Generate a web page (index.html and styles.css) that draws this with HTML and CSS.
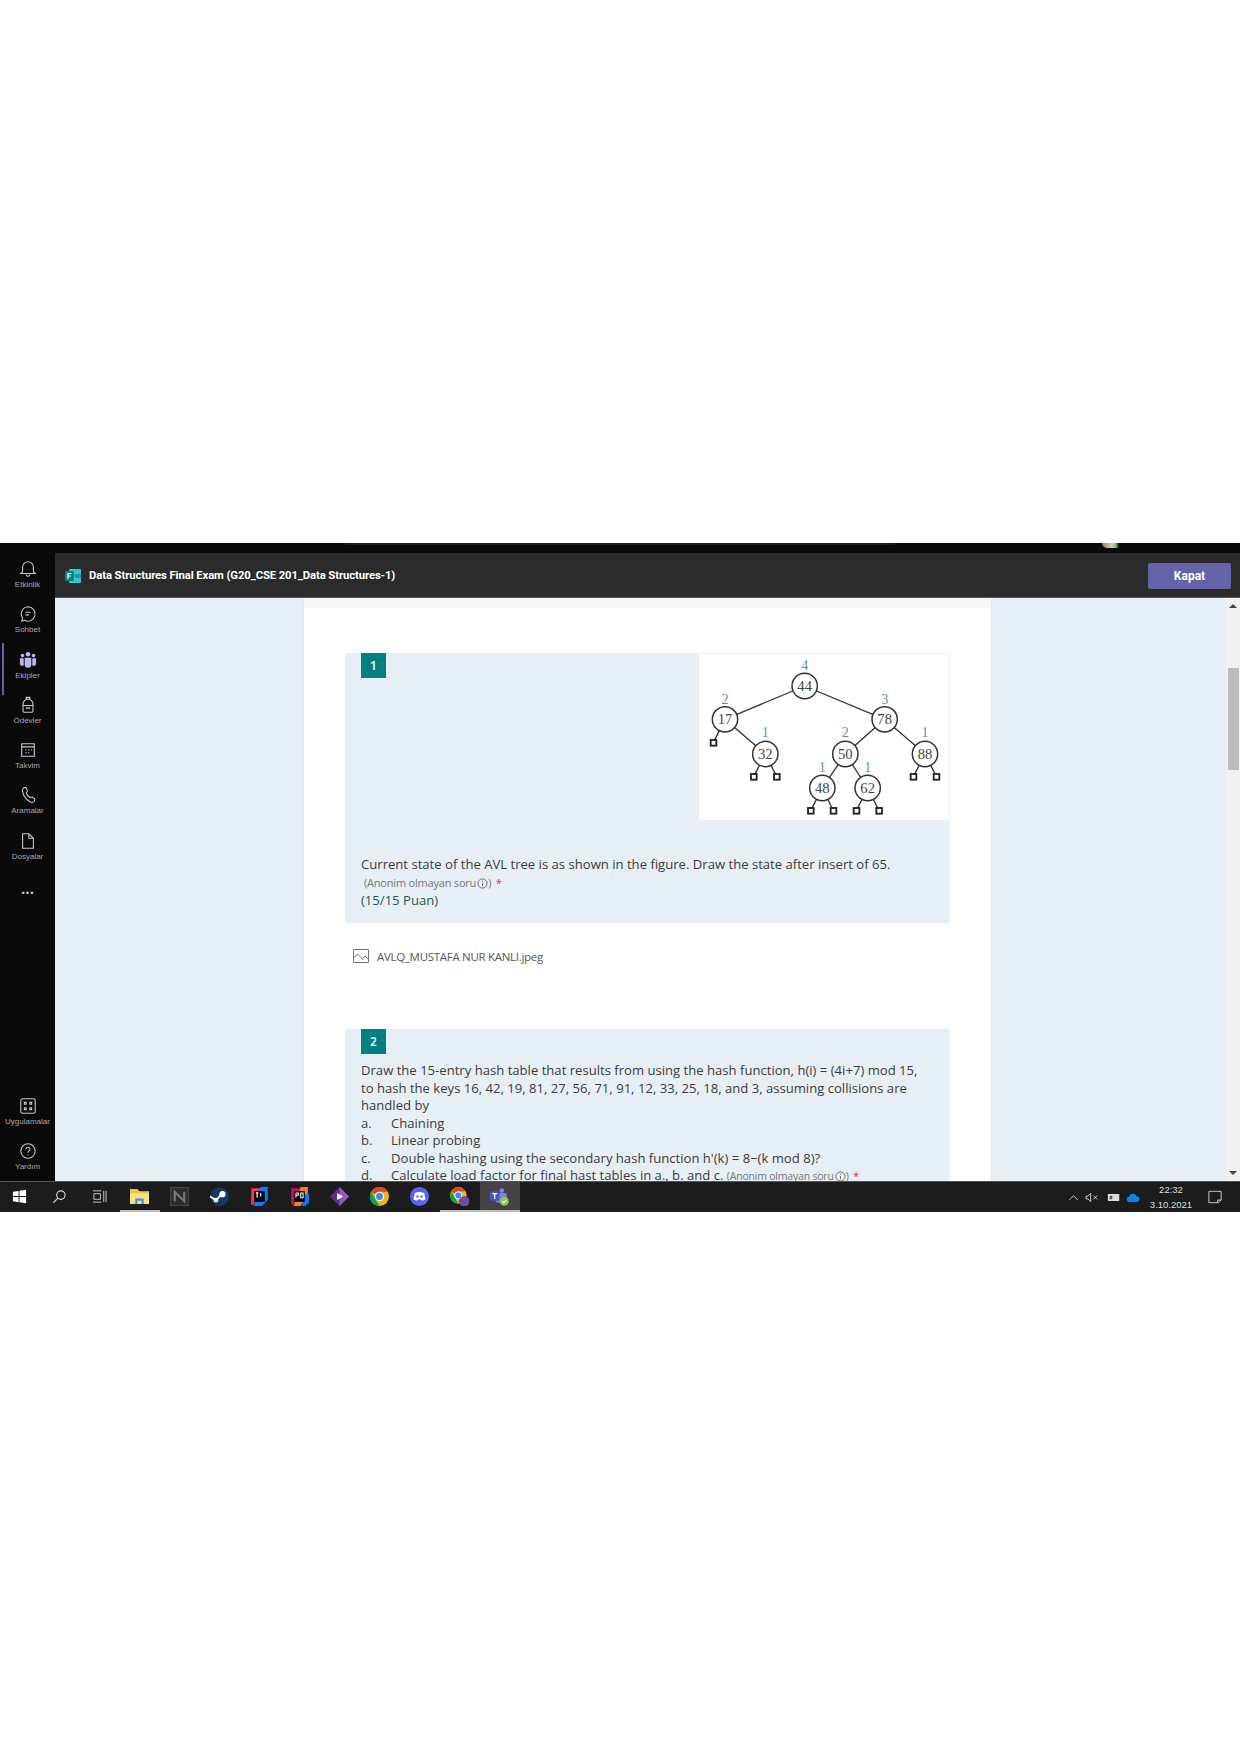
FILE: index.html

```html
<!DOCTYPE html>
<html lang="tr">
<head>
    <meta charset="UTF-8">
    <title>Data Structures Final Exam</title>
    <link rel="stylesheet" href="styles.css">
</head>
<body>
    <div class="screen">
        <div class="app">
            <div class="sidebar">
                <div class="nav-group">
                    <div class="nav-item">
                        <svg viewBox="0 0 20 20"><path d="M4 13V8a6 6 0 0 1 12 0v5l2 2H2zM8 16a2 2 0 0 0 4 0"/></svg>
                        <span>Etkinlik</span>
                    </div>
                    <div class="nav-item">
                        <svg viewBox="0 0 20 20"><path d="M10 2a8 8 0 1 1-4 15l-3 1 1-3.500A8 8 0 0 1 10 2zM7 8h6M7 11h4"/></svg>
                        <span>Sohbet</span>
                    </div>
                    <div class="nav-item active">
                        <svg viewBox="0 0 20 20"><circle cx="10" cy="3.500" r="2.500"/><circle cx="3.800" cy="5" r="2"/><circle cx="16.200" cy="5" r="2"/><path d="M6.300 7.500h7.400v7.500a3.700 3.700 0 0 1-7.400 0zM1 8h4.200v8.500H4a3 3 0 0 1-3-3zM14.800 8H19v5.500a3 3 0 0 1-3 3h-1.200z"/></svg>
                        <span>Ekipler</span>
                    </div>
                    <div class="nav-item">
                        <svg viewBox="0 0 20 20"><path d="M4.500 9a5.500 5.500 0 0 1 11 0v8a1 1 0 0 1-1 1h-9a1 1 0 0 1-1-1zM8 3.800V1.500h4v2.300M4.500 10.500h11M7.500 13.500h5"/></svg>
                        <span>Ödevler</span>
                    </div>
                    <div class="nav-item">
                        <svg viewBox="0 0 20 20"><path d="M3 3h14v14H3zM3 6.500h14M7 10h1.500M10 10h1.500M13 10h1.500M7 13h1.500M10 13h1.500"/></svg>
                        <span>Takvim</span>
                    </div>
                    <div class="nav-item">
                        <svg viewBox="0 0 20 20"><path d="M5 2l2.500-.5 2 4-1.500 2c.5 2 2.500 4.500 4.500 5.500l2-1 3 2.500-.5 2.500c-1 1.500-3 1.500-5 .5C8 15 4.500 10 4 6c-.2-1.500 0-3 1-4z"/></svg>
                        <span>Aramalar</span>
                    </div>
                    <div class="nav-item">
                        <svg viewBox="0 0 20 20"><path d="M4 2h7l5 5v11H4zM11 2v5h5"/></svg>
                        <span>Dosyalar</span>
                    </div>
                    <div class="nav-more">...</div>
                </div>
                <div class="nav-group">
                    <div class="nav-item">
                        <svg viewBox="0 0 20 20"><rect x="2" y="2" width="16" height="16" rx="2"/><path d="M6 6h2v2H6zM12 6h2v2h-2zM6 12h2v2H6zM12 12h2v2h-2z"/></svg>
                        <span>Uygulamalar</span>
                    </div>
                    <div class="nav-item">
                        <svg viewBox="0 0 20 20"><circle cx="10" cy="10" r="8"/><path d="M7.800 8a2.200 2.200 0 1 1 3.400 1.900c-.8.500-1.200 1-1.200 2M10 14v.8"/></svg>
                        <span>Yardım</span>
                    </div>
                </div>
            </div>

            <div class="main">
                <div class="top-strip">
                    <div class="top-strip-inner"></div>
                    <div class="avatar-bit"></div>
                </div>
                <div class="titlebar">
                    <svg class="forms-logo" viewBox="0 0 16 14"><rect x="4" y="0" width="12" height="14" rx="1" fill="#37c6d0"/><rect x="10" y="5" width="6" height="4" fill="#1a9ba1"/><rect x="0" y="2" width="9" height="10" rx="1" fill="#038387"/><path d="M3 10V4.500h3.500M3 7h3" stroke="#fff" stroke-width="1.200" fill="none"/></svg>
                    <div class="title">Data Structures Final Exam (G20_CSE 201_Data Structures-1)</div>
                    <button class="close-btn">Kapat</button>
                </div>
                <div class="content">
                    <div class="page">
                        <div class="card">
                            <div class="card-top"></div>
                            <div class="question first">
                                <div class="q-head">
                                    <div class="badge">1</div>
                                    <svg class="tree" viewBox="58 42 750 498">
                                        <rect x="58" y="42" width="750" height="498" fill="#fff"/>
                                        <g class="edges">
                                            <path d="M375 138L136 238M375 138L615 238M136 238L101 308M136 238L257 342M257 342L222 410M257 342L291 410M615 238L497 342M615 238L736 342M497 342L428 444M497 342L564 444M736 342L701 410M736 342L770 410M428 444L393 512M428 444L461 512M564 444L530 512M564 444L598 512"/>
                                        </g>
                                        <g class="leaves">
                                            <rect x="93" y="300" width="17" height="17"/><rect x="214" y="402" width="17" height="17"/><rect x="283" y="402" width="17" height="17"/><rect x="693" y="402" width="17" height="17"/><rect x="762" y="402" width="17" height="17"/><rect x="385" y="504" width="17" height="17"/><rect x="453" y="504" width="17" height="17"/><rect x="522" y="504" width="17" height="17"/><rect x="590" y="504" width="17" height="17"/>
                                        </g>
                                        <g class="nodes">
                                            <circle cx="375" cy="138" r="38"/><circle cx="136" cy="238" r="38"/><circle cx="615" cy="238" r="38"/><circle cx="257" cy="342" r="38"/><circle cx="497" cy="342" r="38"/><circle cx="736" cy="342" r="38"/><circle cx="428" cy="444" r="38"/><circle cx="564" cy="444" r="38"/>
                                        </g>
                                        <g class="keys">
                                            <text x="375" y="153">44</text><text x="136" y="253">17</text><text x="615" y="253">78</text><text x="257" y="357">32</text><text x="497" y="357">50</text><text x="736" y="357">88</text><text x="428" y="459">48</text><text x="564" y="459">62</text>
                                        </g>
                                        <g class="heights">
                                            <text x="375" y="90">4</text><text x="136" y="192">2</text><text x="615" y="192">3</text><text x="257" y="290">1</text><text x="497" y="292">2</text><text x="736" y="292">1</text><text x="428" y="395">1</text><text x="564" y="395">1</text>
                                        </g>
                                    </svg>
                                </div>
                                <div class="q-text q-first-text">Current state of the AVL tree is as shown in the figure. Draw the state after insert of 65.</div>
                                <div class="anon">(Anonim olmayan soru<svg class="info" viewBox="0 0 12 12"><circle cx="6" cy="6" r="5"/><path d="M6 5.500v3.500M6 3v1"/></svg>) <span class="req">*</span></div>
                                <div class="q-text score">(15/15 Puan)</div>
                            </div>

                            <div class="file-row">
                                <svg class="file-icon" viewBox="0 0 16 14"><path d="M.5.500h15v13H.500zM.500 9l4-4 6 6M10 9l2-2 3.500 3.500"/></svg>
                                <span>AVLQ_MUSTAFA NUR KANLI.jpeg</span>
                            </div>

                            <div class="question second">
                                <div class="badge">2</div>
                                <div class="q-text q-body">Draw the 15-entry hash table that results from using the hash function, h(i) = (4i+7) mod 15,<br>to hash the keys 16, 42, 19, 81, 27, 56, 71, 91, 12, 33, 25, 18, and 3, assuming collisions are<br>handled by</div>
                                <div class="q-text opt"><span>a.</span>Chaining</div>
                                <div class="q-text opt"><span>b.</span>Linear probing</div>
                                <div class="q-text opt"><span>c.</span>Double hashing using the secondary hash function h'(k) = 8−(k mod 8)?</div>
                                <div class="q-text opt"><span>d.</span>Calculate load factor for final hast tables in a., b. and c. <em class="anon-inline">(Anonim olmayan soru<svg class="info" viewBox="0 0 12 12"><circle cx="6" cy="6" r="5"/><path d="M6 5.500v3.500M6 3v1"/></svg>) <b class="req">*</b></em></div>
                            </div>
                        </div>
                    </div>
                    <div class="scrollbar">
                        <div class="arrow up"></div>
                        <div class="thumb"></div>
                        <div class="arrow down"></div>
                    </div>
                </div>
            </div>
        </div>

        <div class="taskbar">
            <div class="task small"><svg viewBox="0 0 16 16"><path fill="#fff" d="M1 3l6-1v5.500H1zM8 1.800l7-1v6.700H8zM1 8.500h6V14l-6-1zM8 8.500h7v6.700l-7-1z"/></svg></div>
            <div class="task small"><svg viewBox="0 0 16 16"><circle cx="9.500" cy="6.500" r="4.500" fill="none" stroke="#ddd" stroke-width="1.200"/><path d="M6.300 9.700L1.500 14.500" stroke="#ddd" stroke-width="1.200"/></svg></div>
            <div class="task small"><svg viewBox="0 0 16 16"><path d="M1 2h9M1 14h9M2 5h7v6H2zM12.500 2v12M15 2v12" fill="none" stroke="#ccc"/></svg></div>
            <div class="task underlined"><svg viewBox="0 0 18 16"><path fill="#f0c24a" d="M0 1h7l2 2h9v12H0z"/><path fill="#fbe08a" d="M0 5h18v10H0z"/><path fill="#3a96dd" d="M5 10h8v5h-2v-3H7v3H5z"/></svg></div>
            <div class="task"><svg viewBox="0 0 16 16"><rect x=".5" y=".5" width="15" height="15" fill="#2b2b2b" stroke="#444"/><path d="M4 12V4l8 8V4" fill="none" stroke="#777" stroke-width="1.800"/></svg></div>
            <div class="task"><svg viewBox="0 0 16 16"><circle cx="8" cy="8" r="8" fill="#14385e"/><circle cx="10.500" cy="6" r="2.600" fill="#fff"/><circle cx="5" cy="11" r="2" fill="#fff"/><path d="M0 8l5 3 5-5" stroke="#fff" stroke-width="1.600" fill="none"/></svg></div>
            <div class="task"><svg viewBox="0 0 16 16"><path fill="#fe315d" d="M1 1h8L3 15H1z"/><path fill="#087cfa" d="M9 0h6v11l-5 5H3z"/><rect x="3.500" y="3.500" width="9" height="9" fill="#000"/><path d="M5 5h2M6 5v4M9 5v3" stroke="#fff"/></svg></div>
            <div class="task"><svg viewBox="0 0 16 16"><path fill="#c90f5e" d="M1 1h8L3 15H1z"/><path fill="#f58220" d="M3 16l6-16h6v6L9 16z"/><path fill="#087cfa" d="M12 6h4v7l-3 3h-3z"/><rect x="3.500" y="3.500" width="9" height="9" fill="#000"/><path d="M5 5v4M5 5h2v2H5M9 5v4h2V5z" fill="none" stroke="#fff" stroke-width=".9"/></svg></div>
            <div class="task"><svg viewBox="0 0 16 16"><path fill="#5c2d91" d="M8 0l8 8-8 8-8-8z"/><path fill="#b180d7" d="M8 0l8 8-8 8z" opacity=".6"/><path fill="#fff" d="M6 5l5 3-5 3z"/></svg></div>
            <div class="task"><svg viewBox="0 0 16 16"><circle cx="8" cy="8" r="8" fill="#e9b61c"/><path fill="#db4437" d="M1 4a8 8 0 0 1 14 0H8a4 4 0 0 0-4 2z"/><path fill="#0f9d58" d="M1 4l4 7 3 5A8 8 0 0 1 1 4z"/><circle cx="8" cy="8" r="3.400" fill="#4285f4" stroke="#fff"/></svg></div>
            <div class="task"><svg viewBox="0 0 16 16"><circle cx="8" cy="8" r="8" fill="#5865f2"/><path fill="#fff" d="M4 5c2.500-1 5.500-1 8 0l1 5.500c-1 .6-2 1-3 1l-.6-1H6.600l-.6 1c-1 0-2-.4-3-1z"/><circle cx="6.300" cy="8" r="1" fill="#5865f2"/><circle cx="9.700" cy="8" r="1" fill="#5865f2"/></svg></div>
            <div class="task underlined"><svg viewBox="0 0 16 16"><circle cx="7" cy="7" r="7" fill="#e9b61c"/><path fill="#db4437" d="M1 3.500a7 7 0 0 1 12 0H7a3.500 3.500 0 0 0-3 2z"/><path fill="#0f9d58" d="M1 3.500L7 14A7 7 0 0 1 1 3.500z"/><circle cx="7" cy="7" r="3" fill="#4285f4" stroke="#fff" stroke-width=".8"/><circle cx="12" cy="12" r="4.500" fill="#6b4fa0"/></svg></div>
            <div class="task underlined current"><svg viewBox="0 0 16 16"><circle cx="10" cy="3" r="2" fill="#7b83eb"/><rect x="5" y="5" width="9" height="8" rx="1" fill="#7b83eb"/><rect x="0" y="3.500" width="8" height="8" rx="1" fill="#4b53bc"/><path d="M2 5.500h4M4 5.500v4.500" stroke="#fff"/><circle cx="12" cy="12" r="3.800" fill="#92c353"/><path d="M10.500 12l1.200 1.200 2-2.200" stroke="#fff" fill="none"/></svg></div>

            <div class="tray">
                <svg class="tray-caret" viewBox="0 0 12 8"><path d="M1 7l5-5 5 5"/></svg>
                <svg class="tray-sound" viewBox="0 0 16 12"><path d="M1 4.500h2L6 1.500v9l-3-3H1zM9 4l4 4M13 4l-4 4"/></svg>
                <svg class="tray-battery" viewBox="0 0 16 10"><path fill="#ddd" d="M1 1h13v8H1z"/><path fill="#555" d="M3 3h3v4H3z"/></svg>
                <svg class="tray-cloud" viewBox="0 0 16 10"><path fill="#0a84e0" d="M4 10a3 3 0 0 1-.500-6A4.500 4.500 0 0 1 12 3.500 3.300 3.300 0 0 1 13 10z"/></svg>
                <div class="clock">22:32<br>3.10.2021</div>
                <svg class="tray-note" viewBox="0 0 16 16"><path d="M1 1.500h14v10l-3 3H1zM11 14.500v-3h4"/></svg>
            </div>
        </div>
    </div>
</body>
</html>
```

FILE: styles.css

```css
body {
    margin: 0;
    min-height: 1755px;
    background: #fff;
    font-family: "Open Sans", "Liberation Sans", sans-serif;
}
.screen {
    margin-top: 543px;
    height: 669px;
    display: flex;
    flex-direction: column;
}
.app {
    display: flex;
    height: 638px;
}

/* left rail */
.sidebar {
    width: 55px;
    flex-shrink: 0;
    background: #0a0a0a;
    display: flex;
    flex-direction: column;
    justify-content: space-between;
    padding: 17px 0 0;
    box-sizing: border-box;
}
.nav-group {
    display: flex;
    flex-direction: column;
}
.nav-group:last-child .nav-item:last-child {
    height: 39px;
}
.nav-item {
    height: 45.3px;
    display: flex;
    flex-direction: column;
    align-items: center;
    color: #a8a8a8;
    font-family: "Liberation Sans", sans-serif;
    font-size: 8px;
    line-height: 11px;
    position: relative;
}
.nav-item svg {
    width: 18px;
    height: 18px;
    fill: none;
    stroke: #c8c8c8;
    stroke-width: 1.200;
    margin-bottom: 1px;
}
.nav-item.active {
    color: #9ea2e0;
}
.nav-item.active svg {
    fill: #b8bbf0;
    stroke: none;
}
.nav-item.active::before {
    content: "";
    position: absolute;
    left: 2px;
    top: -8px;
    bottom: 1px;
    width: 2px;
    background: #6264a7;
}
.nav-more {
    color: #c8c8c8;
    text-align: center;
    font-size: 15px;
    font-weight: 700;
    line-height: 12px;
    margin-top: 5px;
}

.main {
    flex: 1;
    min-width: 0;
    display: flex;
    flex-direction: column;
}
.top-strip {
    height: 10px;
    background: #0a0a0a;
    position: relative;
}
.top-strip-inner {
    width: 550px;
    height: 2px;
    margin-left: 290px;
    background: #1c1c1c;
}
.avatar-bit {
    position: absolute;
    left: 1047px;
    top: 0;
    width: 20px;
    height: 5px;
    border-radius: 0 0 10px 10px;
    background: linear-gradient(90deg, #8a8068, #d8cfb8 50%, #7fc23c 70%, #0a0a0a 85%);
}

.titlebar {
    height: 45px;
    flex-shrink: 0;
    box-sizing: border-box;
    background: #2b2b2b;
    border-bottom: 1px solid #555;
    display: flex;
    align-items: center;
    padding: 1px 9px 0 10px;
}
.forms-logo {
    width: 16px;
    height: 14px;
    margin-right: 8px;
}
.title {
    flex: 1;
    color: #fff;
    font-family: Roboto, sans-serif;
    font-size: 11.300px;
    font-weight: 700;
    letter-spacing: -.1px;
}
.close-btn {
    width: 83px;
    height: 26px;
    border: none;
    border-radius: 2px;
    background: #6264a7;
    color: #fff;
    font-family: Roboto, sans-serif;
    font-size: 12px;
    font-weight: 700;
}

.content {
    flex: 1;
    min-height: 0;
    display: flex;
    overflow: hidden;
    background: #e6eff5;
}
.page {
    flex: 1;
    padding-left: 249px;
}
.card {
    width: 687px;
    background: #fff;
    padding: 0 41px;
    box-sizing: border-box;
    height: 640px;
    box-shadow: 0 0 4px rgba(0,0,0,0.06);
}
.card-top {
    height: 10px;
    margin: 0 -41px;
    background: #f5f6f6;
}
.question {
    background: #e6eff5;
    padding-left: 16px;
}
.question.first {
    margin-top: 45px;
    height: 270px;
    box-sizing: border-box;
    padding-right: 1px;
}
.q-head {
    display: flex;
    justify-content: space-between;
    align-items: flex-start;
}
.badge {
    width: 25px;
    height: 25px;
    background: #008080;
    color: #fff;
    font-size: 12px;
    font-weight: 600;
    line-height: 25px;
    text-align: center;
}
.tree {
    width: 250px;
    height: 166px;
    display: block;
    margin-top: 1px;
}
.edges path {
    fill: none;
    stroke: #333;
    stroke-width: 4;
}
.leaves rect {
    fill: #fff;
    stroke: #222;
    stroke-width: 5.500;
}
.nodes circle {
    fill: #fff;
    stroke: #333;
    stroke-width: 4.500;
}
.keys text {
    font-family: "Liberation Serif", serif;
    font-size: 44px;
    fill: #444;
    text-anchor: middle;
}
.heights text {
    font-family: "Liberation Serif", serif;
    font-size: 42px;
    fill: #4f94c4;
    text-anchor: middle;
}
.q-text {
    color: #3c3c3c;
    font-size: 13.100px;
    line-height: 17.500px;
}
.q-first-text {
    margin-top: 36px;
}
.anon {
    color: #777;
    font-size: 11px;
    line-height: 18px;
    padding-left: 3px;
    letter-spacing: -.2px;
}
.info {
    width: 11px;
    height: 11px;
    margin-left: 1px;
    vertical-align: -2px;
    fill: none;
    stroke: #666;
    stroke-width: 1;
}
.req {
    color: #c4314b;
    padding-left: 2px;
}
.score {
    color: #1f5a50;
}
.file-row {
    display: flex;
    align-items: center;
    height: 20px;
    margin-top: 23px;
    padding-left: 8px;
    color: #555;
    font-size: 11.500px;
    letter-spacing: -.3px;
}
.file-icon {
    width: 16px;
    height: 14px;
    margin-right: 8px;
    fill: none;
    stroke: #777;
    stroke-width: 1;
}
.question.second {
    margin-top: 63px;
    padding-bottom: 20px;
}
.q-body {
    margin-top: 8px;
}
.opt span {
    display: inline-block;
    width: 30px;
}
.anon-inline {
    font-style: normal;
    color: #777;
    font-size: 10.500px;
    letter-spacing: -.2px;
}
.anon-inline .req {
    font-weight: 400;
}

.scrollbar {
    width: 14px;
    background: #f1f1f1;
    position: relative;
    flex-shrink: 0;
}
.arrow {
    position: absolute;
    left: 3px;
    width: 0;
    height: 0;
    border-left: 4px solid transparent;
    border-right: 4px solid transparent;
}
.arrow.up {
    top: 6px;
    border-bottom: 4px solid #444;
}
.arrow.down {
    bottom: 6px;
    border-top: 4px solid #444;
}
.thumb {
    position: absolute;
    left: 2px;
    right: 1px;
    top: 70px;
    height: 102px;
    background: #bdbdbd;
}

/* windows taskbar */
.taskbar {
    height: 31px;
    background: #1c1c1c;
    display: flex;
    align-items: stretch;
    border-top: 1px solid #555;
}
.task {
    width: 40px;
    display: flex;
    align-items: center;
    justify-content: center;
    box-sizing: border-box;
    padding: 0 2px 2px 0;
}
.task svg {
    width: 19px;
    height: 19px;
}
.task.small svg {
    width: 15px;
    height: 15px;
}
.task.underlined {
    padding-bottom: 0;
    border-bottom: 2px solid #bbb;
}
.task.current {
    background: #444;
}
.tray {
    margin-left: auto;
    display: flex;
    align-items: center;
    padding-right: 18px;
}
.tray svg {
    fill: none;
    stroke: #ddd;
    stroke-width: 1;
}
.tray-caret {
    width: 11px;
    height: 7px;
    margin-right: 6px;
}
.tray-sound {
    width: 15px;
    height: 11px;
    margin-right: 7px;
}
.tray-battery {
    width: 14px;
    height: 9px;
    margin-right: 5px;
    stroke: none !important;
}
.tray-cloud {
    width: 14px;
    height: 9px;
    margin-right: 6px;
    stroke: none !important;
}
.clock {
    width: 50px;
    color: #ddd;
    font-family: "Liberation Sans", sans-serif;
    font-size: 9.500px;
    line-height: 15px;
    text-align: center;
    margin-right: 12px;
}
.tray-note {
    width: 14px;
    height: 14px;
}
```
